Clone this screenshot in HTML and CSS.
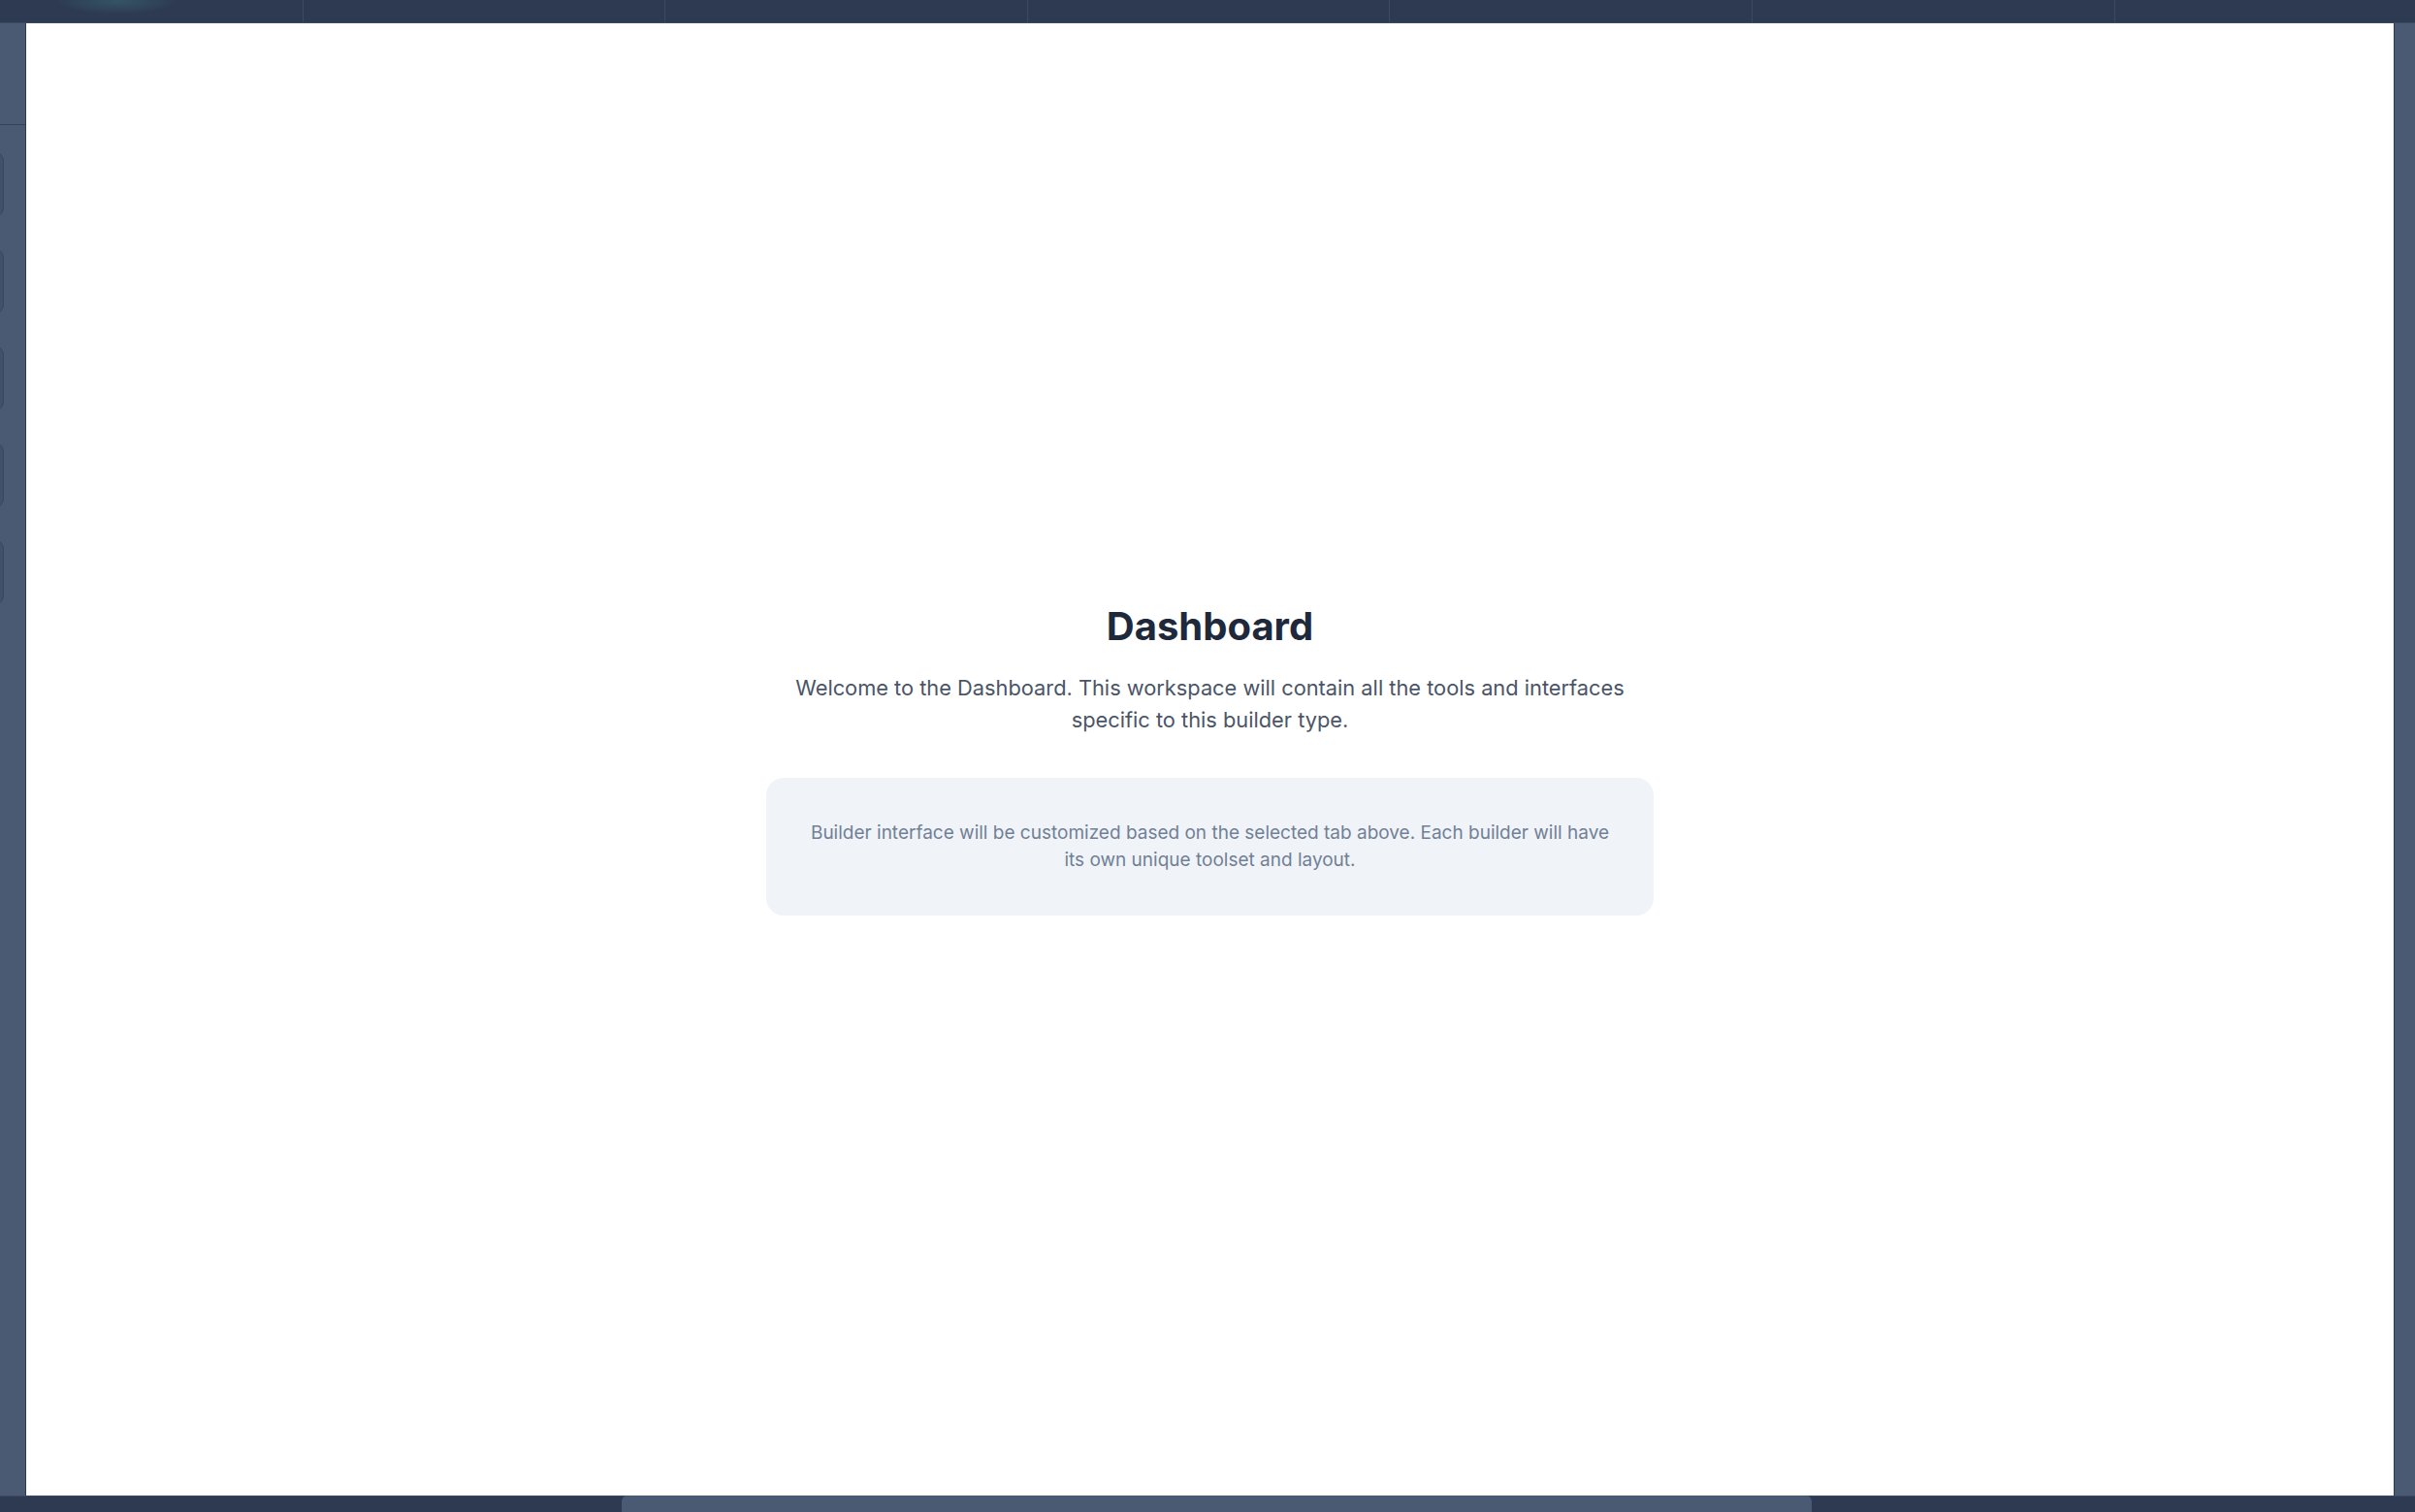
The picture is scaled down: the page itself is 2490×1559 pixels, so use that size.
FILE: index.html
```html
<!DOCTYPE html>
<html lang="en">
<head>
<meta charset="utf-8">
<title>Dashboard</title>
<link rel="stylesheet" href="styles.css">
</head>
<body>
<div class="app">
  <header class="tabbar">
    <div class="tabs">
      <div class="tab active"><span class="glow"></span></div>
      <div class="tab"></div>
      <div class="tab"></div>
      <div class="tab"></div>
      <div class="tab"></div>
      <div class="tab"></div>
      <div class="tab"></div>
      <div class="tab"></div>
    </div>
  </header>
  <div class="middle">
    <aside class="sidebar">
      <div class="side-head"></div>
      <div class="side-list">
        <div class="side-btn"></div>
        <div class="side-btn"></div>
        <div class="side-btn"></div>
        <div class="side-btn"></div>
        <div class="side-btn"></div>
      </div>
    </aside>
    <main class="workspace">
      <div class="intro">
        <h1 class="title">Dashboard</h1>
        <p class="lead">Welcome to the Dashboard. This workspace will contain all the tools and interfaces specific to this builder type.</p>
        <div class="note">
          <p>Builder interface will be customized based on the selected tab above. Each builder will have its own unique toolset and layout.</p>
        </div>
      </div>
    </main>
    <aside class="rightpanel"></aside>
  </div>
  <footer class="bottombar">
    <div class="thumb"></div>
  </footer>
</div>
</body>
</html>
```

FILE: styles.css
```css
* { box-sizing: border-box; }
html, body { margin: 0; padding: 0; }
body {
  width: 2490px;
  height: 1559px;
  overflow: hidden;
  font-family: Inter, "Noto Sans", "Liberation Sans", sans-serif;
  background: #2d3a52;
}
.app {
  display: flex;
  flex-direction: column;
  height: 1559px;
}
.tabbar {
  height: 24px;
  flex: none;
  background: #2d3a52;
  border-bottom: 1px solid #3b4a63;
  overflow: hidden;
}
.tabs {
  display: flex;
  height: 23px;
  margin-left: -61px;
}
.tab {
  flex: none;
  width: 373.6px;
  height: 23px;
  border-right: 1px solid #3b4a63;
  position: relative;
}
.tab .glow {
  position: absolute;
  left: 122px;
  top: -12px;
  width: 120px;
  height: 26px;
  border-radius: 50%;
  background: radial-gradient(ellipse at center, rgba(60, 110, 120, 0.5) 0%, rgba(60, 110, 120, 0.22) 45%, rgba(60, 110, 120, 0) 75%);
}
.middle {
  flex: 1;
  display: flex;
  min-height: 0;
}
.sidebar {
  width: 27px;
  flex: none;
  background: #4a5a72;
  border-right: 1px solid #2d3a52;
  overflow: hidden;
}
.side-head {
  height: 105px;
  border-bottom: 1px solid #34425a;
}
.side-list {
  display: flex;
  flex-direction: column;
  gap: 32px;
  padding-top: 27px;
}
.side-btn {
  width: 200px;
  height: 68px;
  margin-left: -196px;
  background: #42516a;
  border: 1px solid #38465e;
  border-radius: 10px;
}
.workspace {
  flex: 1;
  background: #ffffff;
  display: flex;
  align-items: center;
  justify-content: center;
}
.intro {
  display: flex;
  flex-direction: column;
  align-items: center;
  text-align: center;
}
.title {
  margin: 0;
  font-size: 40px;
  line-height: 48px;
  font-weight: 700;
  color: #1e293b;
}
.lead {
  margin: 23px 0 0;
  max-width: 880px;
  font-size: 21.8px;
  line-height: 33px;
  color: #4a5568;
}
.note {
  margin-top: 43px;
  width: 915px;
  padding: 43px 36px;
  background: #f0f4f8;
  border-radius: 18px;
}
.note p {
  margin: 0;
  font-size: 19px;
  line-height: 28px;
  color: #718096;
}
.rightpanel {
  width: 22px;
  flex: none;
  background: #4a5a72;
  border-left: 1px solid #2d3a52;
}
.bottombar {
  height: 17px;
  flex: none;
  background: #2d3a52;
  border-top: 1px solid #3b4a63;
  position: relative;
}
.thumb {
  position: absolute;
  left: 641px;
  top: -1px;
  width: 1227px;
  height: 17px;
  background: #4a5a72;
  border-radius: 6px 6px 0 0;
}
```
